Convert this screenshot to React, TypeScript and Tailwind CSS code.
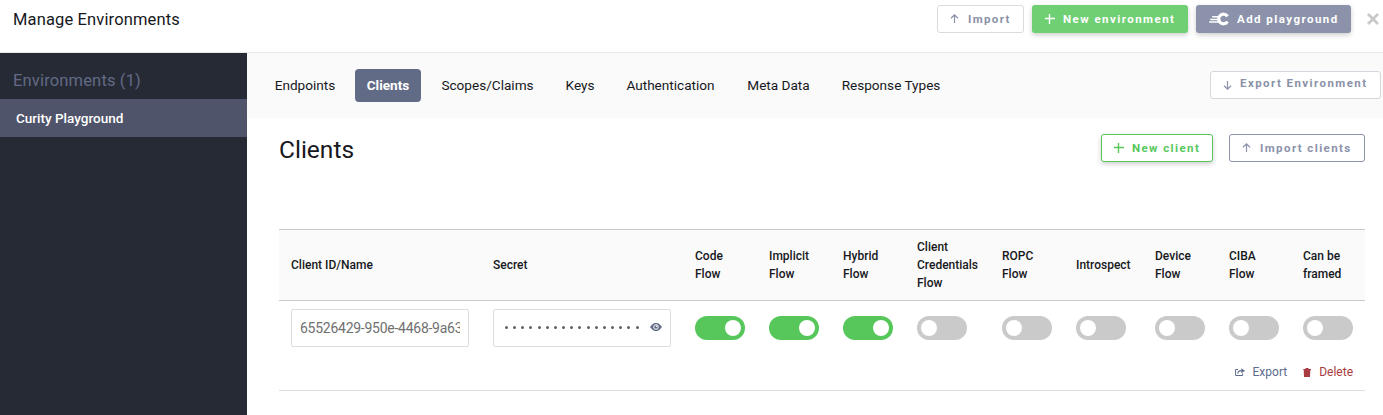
import React from "react";

type IconProps = { className?: string };

const ArrowUp = ({ className = "" }: IconProps) => (
  <svg viewBox="0 0 9 10" className={`h-[10px] w-[9px] ${className}`} fill="none" stroke="currentColor" strokeWidth="1.2">
    <path d="M4.5 9V1M1 4.3 4.5.9 8 4.3" />
  </svg>
);

const ArrowDown = ({ className = "" }: IconProps) => (
  <svg viewBox="0 0 9 10" className={`h-[10px] w-[9px] ${className}`} fill="none" stroke="currentColor" strokeWidth="1.2">
    <path d="M4.5 1v8M1 5.7 4.5 9.1 8 5.7" />
  </svg>
);

const Plus = ({ className = "" }: IconProps) => (
  <svg viewBox="0 0 10 10" className={`h-[10px] w-[10px] ${className}`} fill="none" stroke="currentColor" strokeWidth="1.4">
    <path d="M4.500 0v10M0 4.500h10" />
  </svg>
);

const CurityMark = () => (
  <svg viewBox="0 0 20 14" className="h-[14px] w-[20px]" fill="none" stroke="currentColor">
    <path d="M18.500 4.300A4.800 4.800 0 1 0 18.500 9.700" strokeWidth="3.200" />
    <path d="M3.200 4.800H10M1.200 7.500H10M.2 10H10.500" strokeWidth="1.400" />
  </svg>
);

const Close = () => (
  <svg viewBox="0 0 12 12" className="h-3 w-3" fill="none" stroke="currentColor" strokeWidth="2.8">
    <path d="M1 1l10 10M11 1 1 11" />
  </svg>
);

const Eye = () => (
  <svg viewBox="0 0 12 8" className="h-2 w-3" fill="none">
    <path d="M0 4C3 .1 4.600 0 6 0s3 .1 6 4C9 7.900 7.400 8 6 8S3 7.900 0 4Z" fill="currentColor" />
    <circle cx="6" cy="4" r="2.300" stroke="#fff" strokeWidth="1" />
    <circle cx="6.600" cy="3.300" r=".8" fill="#fff" />
  </svg>
);

const Share = () => (
  <svg viewBox="0 0 10 8" className="h-2 w-[10px]" fill="none" stroke="currentColor">
    <path d="M3 1.500H.6v6h7V5.500" />
    <path d="M2.800 5.500C3 3.300 4.500 2.600 6.500 2.600" strokeWidth="1.200" />
    <path d="M6.300.2 10 2.700 6.300 5.200Z" fill="currentColor" stroke="none" />
  </svg>
);

const Trash = () => (
  <svg viewBox="0 0 8 9" className="h-[9px] w-2" fill="currentColor">
    <path d="M0 1h2.500V0h3v1H8v1.200H.8V2.200ZM.7 2h6.600L7 9H1Z" />
  </svg>
);

const buttonBase =
  "flex h-7 shrink-0 items-center rounded-[3px] text-[11.5px] font-bold leading-none whitespace-nowrap";

const tabs = [
  { label: "Endpoints", width: "w-[84px]" },
  { label: "Clients", width: "w-[66px]" },
  { label: "Scopes/Claims", width: "w-[117px]" },
  { label: "Keys", width: "w-[52px]" },
  { label: "Authentication", width: "w-[113px]" },
  { label: "Meta Data", width: "w-[87px]" },
  { label: "Response Types", width: "w-[122px]" },
];

const flows = [
  { label: "Code Flow", on: true },
  { label: "Implicit Flow", on: true },
  { label: "Hybrid Flow", on: true },
  { label: "Client Credentials Flow", on: false },
  { label: "ROPC Flow", on: false },
  { label: "Introspect", on: false },
  { label: "Device Flow", on: false },
  { label: "CIBA Flow", on: false },
  { label: "Can be framed", on: false },
];

const columns = "grid grid-cols-[202px_202px_74px_74px_74px_85px_74px_79px_74px_74px_74px]";

function Toggle({ on }: { on: boolean }) {
  return (
    <div className={`flex h-6 w-[50px] items-center rounded-full px-1 ${on ? "justify-end bg-[#57c75b]" : "bg-[#cacaca]"}`}>
      <div className="h-4 w-4 rounded-full bg-white" />
    </div>
  );
}

function TopBar() {
  return (
    <header className="flex h-[53px] items-start border-b border-[#e8e8e8] pt-[5px]">
      <h1 className="pt-px pl-[13px] text-[16.5px] leading-7 tracking-[0.14px] text-[#16181c]">Manage Environments</h1>
      <div className="ml-auto flex items-center pr-1">
        <button className={`${buttonBase} w-[87px] border border-[#d8dbe0] bg-white pl-3 tracking-[1.350px] text-[#8a91a8]`}>
          <ArrowUp className="mr-[9px]" />
          <span className="pt-px">Import</span>
        </button>
        <button className={`${buttonBase} ml-2 w-[156px] bg-[#6fcf73] pl-[13px] tracking-[1.450px] text-white shadow-[0_2px_5px_rgba(0,0,0,0.2)]`}>
          <Plus className="mr-[8px]" />
          <span className="pt-px">New environment</span>
        </button>
        <button className={`${buttonBase} ml-2 w-[155px] bg-[#8b92aa] pl-[13px] tracking-[1.450px] text-white shadow-[0_2px_5px_rgba(0,0,0,0.2)]`}>
          <CurityMark />
          <span className="ml-2 pt-px">Add playground</span>
        </button>
        <button className="ml-4 text-[#c9c9c9]" aria-label="Close">
          <Close />
        </button>
      </div>
    </header>
  );
}

function Sidebar() {
  return (
    <aside className="w-[247px] shrink-0 bg-[#262a35]">
      <h2 className="flex h-[46px] items-center pt-[10px] pl-[13px] text-[16.5px] tracking-[0.16px] text-[#626b86]">Environments (1)</h2>
      <div className="flex h-[38px] items-center bg-[#4f546a] pl-4 text-[13.5px] font-medium text-white">Curity Playground</div>
    </aside>
  );
}

function TabBar() {
  return (
    <nav className="flex h-[65px] items-center bg-[#fafafa] pl-4">
      {tabs.map((tab, i) => (
        <div
          key={tab.label}
          className={`flex h-[33px] items-center justify-center pb-px text-[13.6px] whitespace-nowrap ${tab.width} ${i > 0 ? "ml-2" : ""} ${
            i === 1 ? "rounded bg-[#626b86] font-bold text-white" : "text-[#16181c]"
          }`}
        >
          {tab.label}
        </div>
      ))}
      <button className={`${buttonBase} mr-[2px] mb-[2px] ml-auto w-[171px] border border-[#d3d8de] bg-white pl-3 tracking-[1.430px] text-[#8a91a8]`}>
        <ArrowDown className="mr-2" />
        <span className="pb-px">Export Environment</span>
      </button>
    </nav>
  );
}

function ClientsPanel() {
  return (
    <section className="pt-4 pr-[18px] pl-8">
      <div className="flex items-start">
        <h2 className="text-[24.5px] leading-8 text-[#16181c]">Clients</h2>
        <button className={`${buttonBase} ml-auto w-28 border border-[#57c75b] bg-white pl-3 tracking-[1.400px] text-[#57c75b] shadow-[0_2px_5px_rgba(0,0,0,0.2)]`}>
          <Plus className="mr-2" />
          <span className="pt-px">New client</span>
        </button>
        <button className={`${buttonBase} ml-4 w-[136px] border border-[#8b92aa] bg-white pl-3 tracking-[1.400px] text-[#8b92aa]`}>
          <ArrowUp className="mr-[9px]" />
          <span className="pt-px">Import clients</span>
        </button>
      </div>

      <div className="mt-[63px] border-b border-[#dedede]">
        <div className={`${columns} h-[72px] items-center border-y border-[#c8c8c8] bg-[#fafafa] text-xs leading-[18px] font-medium text-[#16181c]`}>
          <div className="pl-3">Client ID/Name</div>
          <div className="pl-3">Secret</div>
          {flows.map((flow) => (
            <div key={flow.label} className="pr-3 pl-3">
              {flow.label}
            </div>
          ))}
        </div>
        <div className={`${columns} items-center pt-2`}>
          <div className="pl-3">
            <div className="flex h-[38px] w-[178px] items-center rounded-[2px] border border-[#dcdcdc] px-2 text-sm tracking-[-0.26px] text-[#707070]">
              <span className="overflow-hidden whitespace-nowrap">65526429-950e-4468-9a63</span>
            </div>
          </div>
          <div className="pl-3">
            <div className="flex h-[38px] w-[178px] items-center rounded-[2px] border border-[#dcdcdc] pr-2 pl-[11px] text-[#626b86]">
              <div className="flex gap-[5.170px] pb-px">
                {Array.from({ length: 17 }, (_, i) => (
                  <span key={i} className="h-[3px] w-[3px] rounded-full bg-[#606060]" />
                ))}
              </div>
              <span className="ml-auto pb-[3px]">
                <Eye />
              </span>
            </div>
          </div>
          {flows.map((flow) => (
            <div key={flow.label} className="pl-3">
              <Toggle on={flow.on} />
            </div>
          ))}
        </div>
        <div className="flex h-[43px] items-center justify-end pt-[7px] pr-3 text-xs">
          <a className="flex items-center gap-2 text-[#5c6c8c]">
            <Share />
            Export
          </a>
          <a className="ml-4 flex items-center gap-2 text-[#a83c40]">
            <Trash />
            Delete
          </a>
        </div>
      </div>
    </section>
  );
}

export default function App() {
  return (
    <div className="flex h-[415px] w-[1383px] flex-col overflow-hidden bg-white font-['Roboto',sans-serif]">
      <TopBar />
      <div className="flex flex-1">
        <Sidebar />
        <main className="min-w-0 flex-1">
          <TabBar />
          <ClientsPanel />
        </main>
      </div>
    </div>
  );
}
